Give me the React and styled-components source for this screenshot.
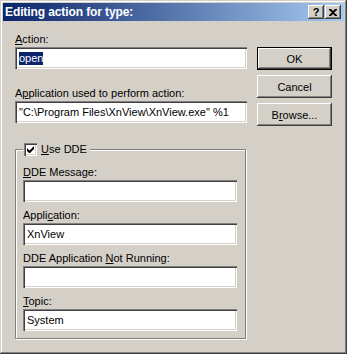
import React from "react";
import styled, { createGlobalStyle } from "styled-components";

const GlobalStyle = createGlobalStyle`
  html, body {
    margin: 0;
    padding: 0;
    background: #d4d0c8;
  }
  body {
    font-family: "Liberation Sans", Arial, sans-serif;
    font-size: 11px;
  }
`;

function App() {
  return (
    <>
      <GlobalStyle />
      <Window>
        <TitleBar>
          <Title>Editing action for type:</Title>
          <TitleButtons>
            <CaptionButton>?</CaptionButton>
            <CaptionButton>
              <svg width="8" height="7" viewBox="0 0 8 7">
                <path d="M0 0h2l2 2 2-2h2v1L5 3.5 8 6v1H6L4 5 2 7H0V6l3-2.5L0 1z" fill="#000" />
              </svg>
            </CaptionButton>
          </TitleButtons>
        </TitleBar>
        <Body>
          <Left>
            <Label><u>A</u>ction:</Label>
            <EditBox>
              <Selected>open</Selected>
            </EditBox>
            <Label $top={18}>A<u>p</u>plication used to perform action:</Label>
            <EditBox>"C:\Program Files\XnView\XnView.exe" %1</EditBox>

            <Group>
              <Legend>
                <Checkbox>
                  <svg width="7" height="7" viewBox="0 0 7 7">
                    <path d="M0 2v3l2 2h1l4-4V0L2.5 4.5z" fill="#000" />
                  </svg>
                </Checkbox>
                <span><u>U</u>se DDE</span>
              </Legend>
              <Label><u>D</u>DE Message:</Label>
              <EditBox />
              <Label $top={7}>Appli<u>c</u>ation:</Label>
              <EditBox>XnView</EditBox>
              <Label $top={7}>DDE Application <u>N</u>ot Running:</Label>
              <EditBox />
              <Label $top={7}><u>T</u>opic:</Label>
              <EditBox>System</EditBox>
            </Group>
          </Left>
          <Right>
            <Button $default>OK</Button>
            <Button>Cancel</Button>
            <Button>B<u>r</u>owse...</Button>
          </Right>
        </Body>
      </Window>
    </>
  );
}

const Window = styled.div`
  width: 347px;
  height: 354px;
  box-sizing: border-box;
  padding: 3px;
  background: #d4d0c8;
  box-shadow: inset -1px -1px #404040, inset 1px 1px #d4d0c8,
    inset -2px -2px #808080, inset 2px 2px #fff;
  display: flex;
  flex-direction: column;
  color: #000;
`;

const TitleBar = styled.div`
  height: 18px;
  display: flex;
  align-items: center;
  justify-content: space-between;
  background: linear-gradient(to right, #0a246a, #a6caf0);
  padding: 0 3px 0 2px;
`;

const Title = styled.span`
  color: #fff;
  font-weight: bold;
  font-size: 12px;
  letter-spacing: -0.1px;
`;

const TitleButtons = styled.div`
  display: flex;
  gap: 1px;
`;

const CaptionButton = styled.div`
  width: 16px;
  height: 14px;
  box-sizing: border-box;
  background: #d4d0c8;
  box-shadow: inset -1px -1px #404040, inset 1px 1px #fff,
    inset -2px -2px #808080, inset 2px 2px #d4d0c8;
  display: flex;
  align-items: center;
  justify-content: center;
  font-weight: bold;
  font-size: 11px;
  line-height: 14px;
`;

const Body = styled.div`
  flex: 1;
  display: flex;
  padding: 12px 0 0 12px;
`;

const Left = styled.div`
  width: 232px;
  display: flex;
  flex-direction: column;
`;

const Right = styled.div`
  margin-left: 10px;
  padding-top: 14px;
  display: flex;
  flex-direction: column;
  gap: 5px;
`;

const Label = styled.div`
  height: 13px;
  line-height: 13px;
  margin-top: ${(p) => p.$top || 0}px;
  margin-bottom: 1px;
  white-space: nowrap;
`;

const EditBox = styled.div`
  height: 22px;
  box-sizing: border-box;
  background: #fff;
  box-shadow: inset 1px 1px #808080, inset 2px 2px #404040,
    inset -1px -1px #fff, inset -2px -2px #d4d0c8;
  display: flex;
  align-items: center;
  padding: 0 4px;
  white-space: nowrap;
  overflow: hidden;
`;

const Selected = styled.span`
  background: #0a246a;
  color: #fff;
  line-height: 13px;
`;

const Group = styled.fieldset`
  margin: 20px 0 0 0;
  width: 231px;
  box-sizing: border-box;
  padding: 10px 8px 7px 7px;
  border: 1px solid #808080;
  box-shadow: inset 1px 1px #fff, 1px 1px #fff;
  display: flex;
  flex-direction: column;
  min-width: 0;
`;

const Legend = styled.legend`
  display: flex;
  align-items: center;
  gap: 4px;
  height: 13px;
  line-height: 13px;
  padding: 0 3px 0 1px;
  margin-left: 0;
  background: #d4d0c8;
`;

const Checkbox = styled.span`
  width: 13px;
  height: 13px;
  box-sizing: border-box;
  background: #fff;
  box-shadow: inset 1px 1px #808080, inset 2px 2px #404040,
    inset -1px -1px #fff, inset -2px -2px #d4d0c8;
  display: flex;
  align-items: center;
  justify-content: center;
`;

const Button = styled.div`
  width: 75px;
  height: 23px;
  box-sizing: border-box;
  display: flex;
  align-items: center;
  justify-content: center;
  background: #d4d0c8;
  box-shadow: ${(p) =>
    p.$default
      ? "inset 0 0 0 1px #000, inset -2px -2px #404040, inset 2px 2px #fff, inset -3px -3px #808080"
      : "inset -1px -1px #404040, inset 1px 1px #fff, inset -2px -2px #808080, inset 2px 2px #d4d0c8"};
`;

export default App;
